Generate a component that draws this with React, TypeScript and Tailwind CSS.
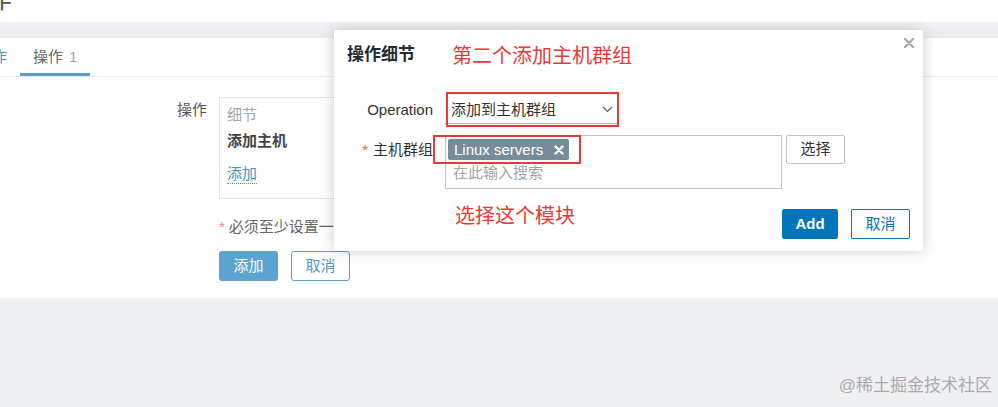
export default function App() {
  return (
    <div className="relative h-[407px] w-full overflow-hidden bg-[#eef0f2] font-['Liberation_Sans','Noto_Sans_CJK_SC',sans-serif] text-[15px] text-[#333]">
      {/* Page header (cut off at the top) */}
      <div className="h-[22px] overflow-hidden bg-white">
        <span className="-ml-[14px] -mt-[16px] block text-[26px] leading-[30px] text-[#555]">作</span>
      </div>
      <div className="h-[16px] bg-gradient-to-b from-[#f3f4f5] to-[#e8ebed]" />

      {/* Main card */}
      <div className="h-[260px] bg-white">
        {/* Tabs */}
        <div className="flex h-[39px] border-b border-[#ebeef0]">
          <div className="-ml-[36px] flex flex-col">
            <div className="flex h-[35px] items-end px-[13px] pb-[6px] leading-[20px] text-[#4796c4]">动作</div>
          </div>
          <div className="flex flex-col">
            <div className="flex h-[35px] items-end px-[13px] pb-[6px] leading-[20px] text-[#666]">
              操作<span className="ml-[6px] text-[#9aa5ab]">1</span>
            </div>
            <div className="h-[3px] bg-[#5a9fc6]" />
          </div>
        </div>

        {/* Form */}
        <div className="mt-[20px] grid grid-cols-[207px_1fr] gap-x-[12px]">
          <div className="pt-[3px] text-right leading-[20px] text-[#555]">操作</div>
          <div className="flex h-[102px] w-[520px] flex-col border border-[#e6e9eb] px-[7px] pt-[7px] leading-[20px]">
            <div className="text-[#a0a7ab]">细节</div>
            <div className="mt-[6px] font-bold text-[#444]">添加主机</div>
            <div className="mt-[13px] flex">
              <span className="border-b border-dotted border-[#4796c4] leading-[19px] text-[#4796c4]">添加</span>
            </div>
          </div>

          <div />
          <div className="mt-[18px] leading-[20px] text-[#666]">
            <span className="mr-[4px] text-[#e88a8a]">*</span>
            必须至少设置一个操作或恢复操作或更新操作。
          </div>

          <div />
          <div className="mt-[14px] flex gap-[13px]">
            <button className="h-[30px] w-[59px] rounded-[3px] bg-[#5ba4cf] text-white">添加</button>
            <button className="h-[30px] w-[59px] rounded-[3px] border border-[#5a9fc6] bg-white text-[#4f97c2]">取消</button>
          </div>
        </div>
      </div>

      {/* Modal: 操作细节 */}
      <div className="absolute left-[334px] top-[30px] h-[221px] w-[589px] bg-white px-[13px] pt-[13px] shadow-[0_0_14px_rgba(0,0,0,0.2)]">
        <div className="text-[17px] font-bold leading-[24px] text-[#1f2c33]">操作细节</div>
        <svg className="absolute right-[9px] top-[8px]" width="10" height="10" viewBox="0 0 10 10">
          <path d="M1 1L9 9M9 1L1 9" stroke="#a3aaae" strokeWidth="2.4" strokeLinecap="round" />
        </svg>

        <div className="mt-[29px] grid grid-cols-[86px_1fr] gap-x-[12px]">
          <div className="flex items-center justify-end leading-[20px] text-[#333]">Operation</div>
          <div className="flex h-[28px] w-[172px] items-center justify-between border-b border-[#b8b8b8] pl-[6px] pr-[4px]">
            <span className="leading-[20px]">添加到主机群组</span>
            <svg width="11" height="7" viewBox="0 0 11 7">
              <path d="M1 1L5.5 5.5L10 1" stroke="#555" strokeWidth="1.1" fill="none" />
            </svg>
          </div>

          <div className="mt-[11px] pt-[5px] text-right leading-[20px] text-[#333]">
            <span className="mr-[5px] text-[#e0652e]">*</span>主机群组
          </div>
          <div className="mt-[11px] flex items-start">
            <div className="flex h-[54px] w-[337px] flex-col border border-[#c2c2c2] pl-[2px] pt-[3px]">
              <div className="flex h-[21px] w-[121px] items-center rounded-[2px] bg-[#768d99] pl-[6px] leading-[21px] text-white">
                Linux servers
                <svg className="ml-[11px]" width="10" height="10" viewBox="0 0 10 10">
                  <path d="M1.5 1.5L8.5 8.5M8.5 1.5L1.5 8.5" stroke="#fff" strokeWidth="2.4" strokeLinecap="round" />
                </svg>
              </div>
              <div className="mt-[3px] pl-[5px] leading-[20px] text-[#a3a3a3]">在此输入搜索</div>
            </div>
            <button className="ml-[4px] h-[29px] w-[59px] rounded-[2px] border border-[#c2c2c2] bg-white text-[#333]">选择</button>
          </div>
        </div>

        <div className="mt-[20px] flex justify-end gap-[13px]">
          <button className="h-[30px] w-[56px] rounded-[2px] bg-[#0275b8] font-bold text-white">Add</button>
          <button className="h-[30px] w-[59px] rounded-[2px] border border-[#0275b8] bg-white text-[#0275b8]">取消</button>
        </div>

        {/* Red annotations */}
        <div className="absolute left-[118px] top-[12px] text-[20px] leading-[28px] text-[#e63a37]">第二个添加主机群组</div>
        <div className="absolute left-[112px] top-[62px] h-[35px] w-[173px] border-2 border-[#e63a37]" />
        <div className="absolute left-[99px] top-[105px] h-[29px] w-[148px] border-2 border-[#e63a37]" />
        <div className="absolute left-[121px] top-[172px] text-[20px] leading-[28px] text-[#e63a37]">选择这个模块</div>
      </div>

      {/* Watermark */}
      <div className="absolute bottom-[9px] right-[6px] text-[17px] leading-[24px] text-[#ababab]">@稀土掘金技术社区</div>
    </div>
  );
}
